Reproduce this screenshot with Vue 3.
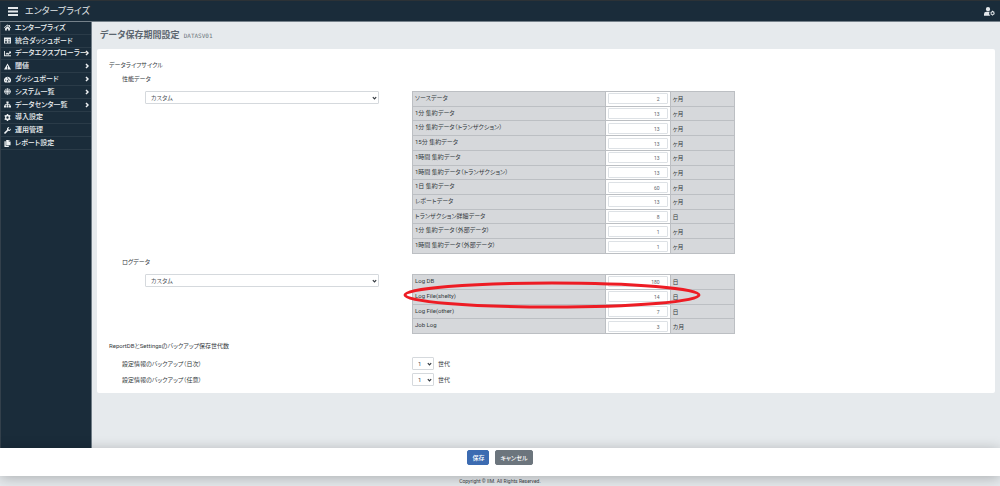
<script setup>
import { ref } from 'vue'

const icons = {
  home: 'M8 1 0 8l1 1.300 7-6 7 6L16 8l-2.500-2.200V2h-2v2zM2.500 9.500 8 5l5.500 4.500V15h-4v-4h-3v4h-4z',
  board: 'M0 1h16v14H0zM2 5.500v2h5v-2zM9 5.500v2h5v-2zM2 9.500v3.500h5V9.500zM9 9.500V11h5V9.500zM9 12v1h5v-1z',
  chart: 'M0 2h2v10h14v2.500H0zM3.500 9 7 5.500l2.500 2.500L12.500 5 11 3.500h5v5L14.300 7 9.500 11.500 7 9l-2 2z',
  warning: 'M8 1l8 14H0zM7 6v5h2V6zM7 12v2h2v-2z',
  gauge: 'M8 1.500a8 8 0 0 1 7 12l-1 1.500H2l-1-1.500a8 8 0 0 1 7-12zM7 3.500v2h2v-2zM2.500 8.500v2h2v-2zM11.500 8.500v2h2v-2zM10.500 5.500 8 9.500a1.800 1.800 0 1 0 1.500.800l2.200-4.200z',
  globe: 'M5 5h6v6H5zM5.200 4C5.800 1.500 7 .500 8 .500S10.200 1.500 10.800 4zM4 5H1a8 8 0 0 0 0 6h3zM12 5h3a8 8 0 0 1 0 6h-3zM5.200 12c.600 2.500 1.800 3.500 2.800 3.500s2.200-1 2.800-3.500zM4.200 4c.200-1.200.600-2.200 1-3A7.500 7.500 0 0 0 1.600 4zM11.800 4c-.200-1.200-.600-2.200-1-3a7.500 7.500 0 0 1 3.600 3zM4.200 12c.200 1.200.600 2.200 1 3a7.500 7.500 0 0 1-3.600-3zM11.800 12c-.200 1.200-.600 2.200-1 3a7.500 7.500 0 0 0 3.600-3z',
  sitemap: 'M5.500 1h5v4.500H8.800V7.500H14V10h2v5h-4.500v-5h1V9H8.800v1h1.500v5H5.700v-5h1.500V9H3.500v1h1v5H0v-5h2V7.500h5.200v-2H5.500z',
  cog: 'M6.500 0h3l.500 2.200 1.500.800 2.200-.800 1.500 2.600L13.500 6.500v3l1.700 1.700-1.500 2.600-2.200-.800-1.500.800-.500 2.200h-3L6 13.800 4.500 13l-2.200.800-1.500-2.600L2.500 9.500v-3L.800 4.800l1.500-2.600 2.200.800L6 2.200zM8 5.300a2.700 2.700 0 1 0 0 5.400 2.700 2.700 0 0 0 0-5.400z',
  wrench: 'M15.600 3.500a4.500 4.500 0 0 1-6 5.300l-6.400 6.400a1.800 1.800 0 0 1-2.500-2.500l6.400-6.400a4.500 4.500 0 0 1 5.300-6L10 2.800l.500 2.700 2.700.500z',
  copy: 'M5 0h6v4h4v8H5zM12 0l3 3h-3zM1 3h3v10h7v3H1z',
}

const menu = [
  { icon: 'home', label: 'エンタープライズ' },
  { icon: 'board', label: '統合ダッシュボード' },
  { icon: 'chart', label: 'データエクスプローラー', sub: true },
  { icon: 'warning', label: '閾値', sub: true },
  { icon: 'gauge', label: 'ダッシュボード', sub: true },
  { icon: 'globe', label: 'システム一覧', sub: true },
  { icon: 'sitemap', label: 'データセンタ一覧', sub: true },
  { icon: 'cog', label: '導入設定' },
  { icon: 'wrench', label: '運用管理' },
  { icon: 'copy', label: 'レポート設定' },
]

const sections = ref([
  {
    id: 'perf',
    title: '性能データ',
    rows: [
      { label: 'ソースデータ', value: '2', unit: 'ヶ月' },
      { label: '1分 集約データ', value: '13', unit: 'ヶ月' },
      { label: '1分 集約データ（トランザクション）', value: '13', unit: 'ヶ月' },
      { label: '15分 集約データ', value: '13', unit: 'ヶ月' },
      { label: '1時間 集約データ', value: '13', unit: 'ヶ月' },
      { label: '1時間 集約データ（トランザクション）', value: '13', unit: 'ヶ月' },
      { label: '1日 集約データ', value: '60', unit: 'ヶ月' },
      { label: 'レポートデータ', value: '13', unit: 'ヶ月' },
      { label: 'トランザクション詳細データ', value: '8', unit: '日' },
      { label: '1分 集約データ（外部データ）', value: '1', unit: 'ヶ月' },
      { label: '1時間 集約データ（外部データ）', value: '1', unit: 'ヶ月' },
    ],
  },
  {
    id: 'log',
    title: 'ログデータ',
    marked: true,
    rows: [
      { label: 'Log DB', value: '180', unit: '日' },
      { label: 'Log File(shelty)', value: '14', unit: '日' },
      { label: 'Log File(other)', value: '7', unit: '日' },
      { label: 'Job Log', value: '3', unit: 'カ月' },
    ],
  },
])

const backups = [
  { id: 'daily', label: '設定情報のバックアップ（日次）' },
  { id: 'manual', label: '設定情報のバックアップ（任意）' },
]
</script>

<template>
  <div class="app">
    <header class="topbar">
      <button class="plain" type="button" aria-label="menu">
        <svg class="bars" viewBox="0 0 10 9"><path d="M0 0h10v2H0zM0 3.500h10v2H0zM0 7h10v2H0z" /></svg>
      </button>
      <span class="brand">エンタープライズ</span>
      <button class="plain user" type="button" aria-label="user">
        <svg class="usericon" viewBox="0 0 22 18" fill-rule="evenodd">
          <path d="M8 0a4.300 4.300 0 1 1 0 8.600A4.300 4.300 0 0 1 8 0zM5 9.500h6.500a6 6 0 0 0 1 8H0V14q0-4.500 5-4.500z" />
          <path d="M16 7.500h2l.400 1.500 1.400-.400 1.400 1.700-.900 1.200.900 1 0 1.500-1.400 1.700-1.400-.400-.400 1.500h-2l-.400-1.500-1.400.400-1.400-1.700.9-1.200-.9-1.200 1.400-2.500 1.400.4zM17 10.500a2 2 0 1 0 0 4 2 2 0 0 0 0-4z" />
        </svg>
      </button>
    </header>

    <div class="middle">
      <nav class="sidebar">
        <ul class="menu">
          <li v-for="m in menu" :key="m.label">
            <a href="#">
              <svg class="icon" viewBox="0 0 16 16" fill-rule="evenodd"><path :d="icons[m.icon]" /></svg>
              <span>{{ m.label }}</span>
              <svg v-if="m.sub" class="arrow" viewBox="0 0 4 6"><path d="M1 1l2 2-2 2" /></svg>
            </a>
          </li>
        </ul>
      </nav>

      <main class="content">
        <h1>データ保存期間設定 <code>DATASV01</code></h1>
        <form id="retention" class="card" @submit.prevent>
          <h2>データライフサイクル</h2>
          <section v-for="s in sections" :key="s.id" class="section">
            <label class="subtitle" :for="s.id">{{ s.title }}</label>
            <div class="grid">
              <div class="select preset">
                <select :id="s.id"><option>カスタム</option></select>
                <svg viewBox="0 0 6 4"><path d="M1 1l2 2 2-2" /></svg>
              </div>
              <div class="tablebox">
                <table :class="s.id">
                  <tbody>
                    <tr v-for="(r, i) in s.rows" :key="r.label">
                      <th scope="row"><label :for="s.id + i">{{ r.label }}</label></th>
                      <td class="value"><input :id="s.id + i" v-model="r.value" type="text" /></td>
                      <td class="unit">{{ r.unit }}</td>
                    </tr>
                  </tbody>
                </table>
                <svg v-if="s.marked" class="marker" viewBox="0 0 298 28" preserveAspectRatio="none">
                  <ellipse cx="149" cy="14" rx="147" ry="12" />
                </svg>
              </div>
            </div>
          </section>

          <h2 class="backuptitle">ReportDBとSettingsのバックアップ保存世代数</h2>
          <div v-for="b in backups" :key="b.id" class="grid backup">
            <label :for="b.id">{{ b.label }}</label>
            <div class="generation">
              <div class="select">
                <select :id="b.id"><option>1</option></select>
                <svg viewBox="0 0 6 4"><path d="M1 1l2 2 2-2" /></svg>
              </div>
              <span>世代</span>
            </div>
          </div>
        </form>
      </main>
    </div>

    <div class="actions">
      <button class="btn save" type="submit" form="retention">保存</button>
      <button class="btn cancel" type="button">キャンセル</button>
    </div>
    <footer class="copyright">Copyright © IIM. All Rights Reserved.</footer>
  </div>
</template>

<style>
body {
  margin: 0;
}
</style>

<style scoped>
.app,
.app * {
  box-sizing: border-box;
}
.app {
  display: flex;
  flex-direction: column;
  min-height: 100vh;
  background: #e6eaed;
  color: #343a40;
  font-family: Roboto, "Noto Sans CJK JP", sans-serif;
  font-feature-settings: "palt";
  font-size: 6px;
  line-height: 8px;
}
button,
input,
select {
  font-family: inherit;
  font-feature-settings: inherit;
  margin: 0;
}
.topbar {
  display: flex;
  align-items: center;
  height: 22px;
  padding: 0 5px 0 8px;
  background: #1a2c3a;
  border-top: 1px solid #2c3236;
  border-bottom: 1px solid #75818a;
  color: #e4e8eb;
}
.plain {
  display: flex;
  padding: 0;
  border: 0;
  background: none;
  color: inherit;
}
.bars {
  width: 10px;
  height: 9px;
  fill: currentColor;
}
.brand {
  margin-left: 7px;
  font-size: 9px;
  line-height: 12px;
}
.user {
  margin-left: auto;
}
.usericon {
  width: 11px;
  height: 9px;
  fill: currentColor;
}
.middle {
  display: flex;
  flex: 1;
}
.sidebar {
  flex: none;
  width: 92px;
  background: #1a2c3a;
  border-left: 1px solid #33404b;
  border-right: 1px solid #6f7c86;
}
.menu {
  display: grid;
  grid-template-columns: minmax(0, 1fr);
  grid-auto-rows: 1fr;
  height: 128px;
  margin: 0;
  padding: 0;
  list-style: none;
}
.menu li {
  display: flex;
  min-height: 0;
  border-bottom: 1px solid #2a3b48;
}
.menu a {
  display: flex;
  flex: 1;
  align-items: center;
  min-width: 0;
  padding: 0 2px 0 3px;
  color: #eef1f3;
  font-size: 7px;
  font-weight: 500;
  line-height: 10px;
  text-decoration: none;
  white-space: nowrap;
}
.menu span {
  flex: 1;
  min-width: 0;
}
.icon {
  flex: none;
  width: 7px;
  height: 7px;
  margin-right: 4px;
  fill: currentColor;
}
.arrow {
  flex: none;
  width: 4px;
  height: 6px;
  fill: none;
  stroke: currentColor;
  stroke-width: 1.5;
}
.content {
  flex: 1;
  min-width: 0;
  padding: 6px 5px 20px;
}
h1 {
  margin: 0 0 7px;
  padding-left: 3px;
  color: #5c666f;
  font-size: 9px;
  font-weight: 600;
  line-height: 14px;
}
h1 code {
  margin-left: 2px;
  color: #6c757d;
  font-family: "DejaVu Sans Mono", monospace;
  font-size: 6px;
  font-weight: 400;
  line-height: 8px;
}
.card {
  padding: 12px 12px 7px;
  background: #fff;
  border-radius: 2px;
}
h2 {
  margin: 0;
  font-size: 6px;
  font-weight: 400;
  line-height: 8px;
}
.subtitle {
  display: block;
  margin: 6px 0 8px 13px;
}
.section + .section .subtitle {
  margin-top: 4px;
}
.grid {
  display: grid;
  grid-template-columns: 36px 234fr 33px 323fr 248fr;
  align-items: start;
}
.select {
  position: relative;
}
.preset {
  grid-column: 2;
}
.select select {
  display: block;
  width: 100%;
  height: 13px;
  padding: 0 5px;
  appearance: none;
  background: #fff;
  border: 1px solid #d5d9dd;
  border-radius: 1px;
  color: #495057;
  font-size: 6px;
  line-height: 10px;
}
.select svg {
  position: absolute;
  top: 5px;
  right: 2px;
  width: 5px;
  height: 4px;
  fill: none;
  stroke: #343a40;
  stroke-width: 1.5;
  pointer-events: none;
}
.tablebox {
  position: relative;
  grid-column: 4;
}
table {
  width: 100%;
  table-layout: fixed;
  border-collapse: collapse;
  background: #d6d8db;
}
.perf {
  height: 163px;
}
.log {
  height: 60px;
}
th,
td {
  padding: 0;
  border: 1px solid #bcbfc3;
  font-weight: 400;
  text-align: left;
}
th {
  width: 60%;
  padding: 2px 2px 0;
  vertical-align: top;
}
th label {
  display: block;
}
.value {
  width: 20%;
  padding: 1px 2px;
  background: #fff;
}
.value input {
  display: block;
  width: 100%;
  height: 11px;
  padding: 1px 7px 0;
  background: #fff;
  border: 1px solid #dde1e5;
  border-radius: 1px;
  color: #5c656d;
  font-size: 5px;
  line-height: 8px;
  text-align: right;
}
.unit {
  padding: 1px 2px 0;
}
.marker {
  position: absolute;
  top: 7px;
  left: -9px;
  width: calc(100% - 25px);
  height: 28px;
  fill: none;
  stroke: #ed1c24;
  stroke-width: 3;
  pointer-events: none;
}
.backuptitle {
  margin-top: 8px;
}
.backup {
  align-items: center;
  margin-top: 3px;
}
h2 + .backup {
  margin-top: 7px;
}
.backup label {
  grid-column: 1 / 4;
  padding-left: 13px;
}
.generation {
  display: flex;
  align-items: center;
  gap: 4px;
}
.generation .select {
  width: 22px;
}
.actions {
  position: relative;
  display: flex;
  justify-content: center;
  gap: 6px;
  height: 28px;
  padding-top: 2px;
  background: #fff;
  box-shadow: 0 2px 14px rgba(0, 0, 0, 0.26);
}
.btn {
  height: 15px;
  padding: 0 4px;
  border: 1px solid #3c6bb1;
  border-radius: 2px;
  color: #fff;
  font-size: 6px;
  font-weight: 500;
  line-height: 12px;
}
.save {
  background: #3c6bb1;
}
.cancel {
  background: #6c757d;
  border-color: #6c757d;
}
.copyright {
  position: relative;
  height: 10px;
  color: #343a40;
  font-size: 5px;
  line-height: 10px;
  text-align: center;
}
</style>
